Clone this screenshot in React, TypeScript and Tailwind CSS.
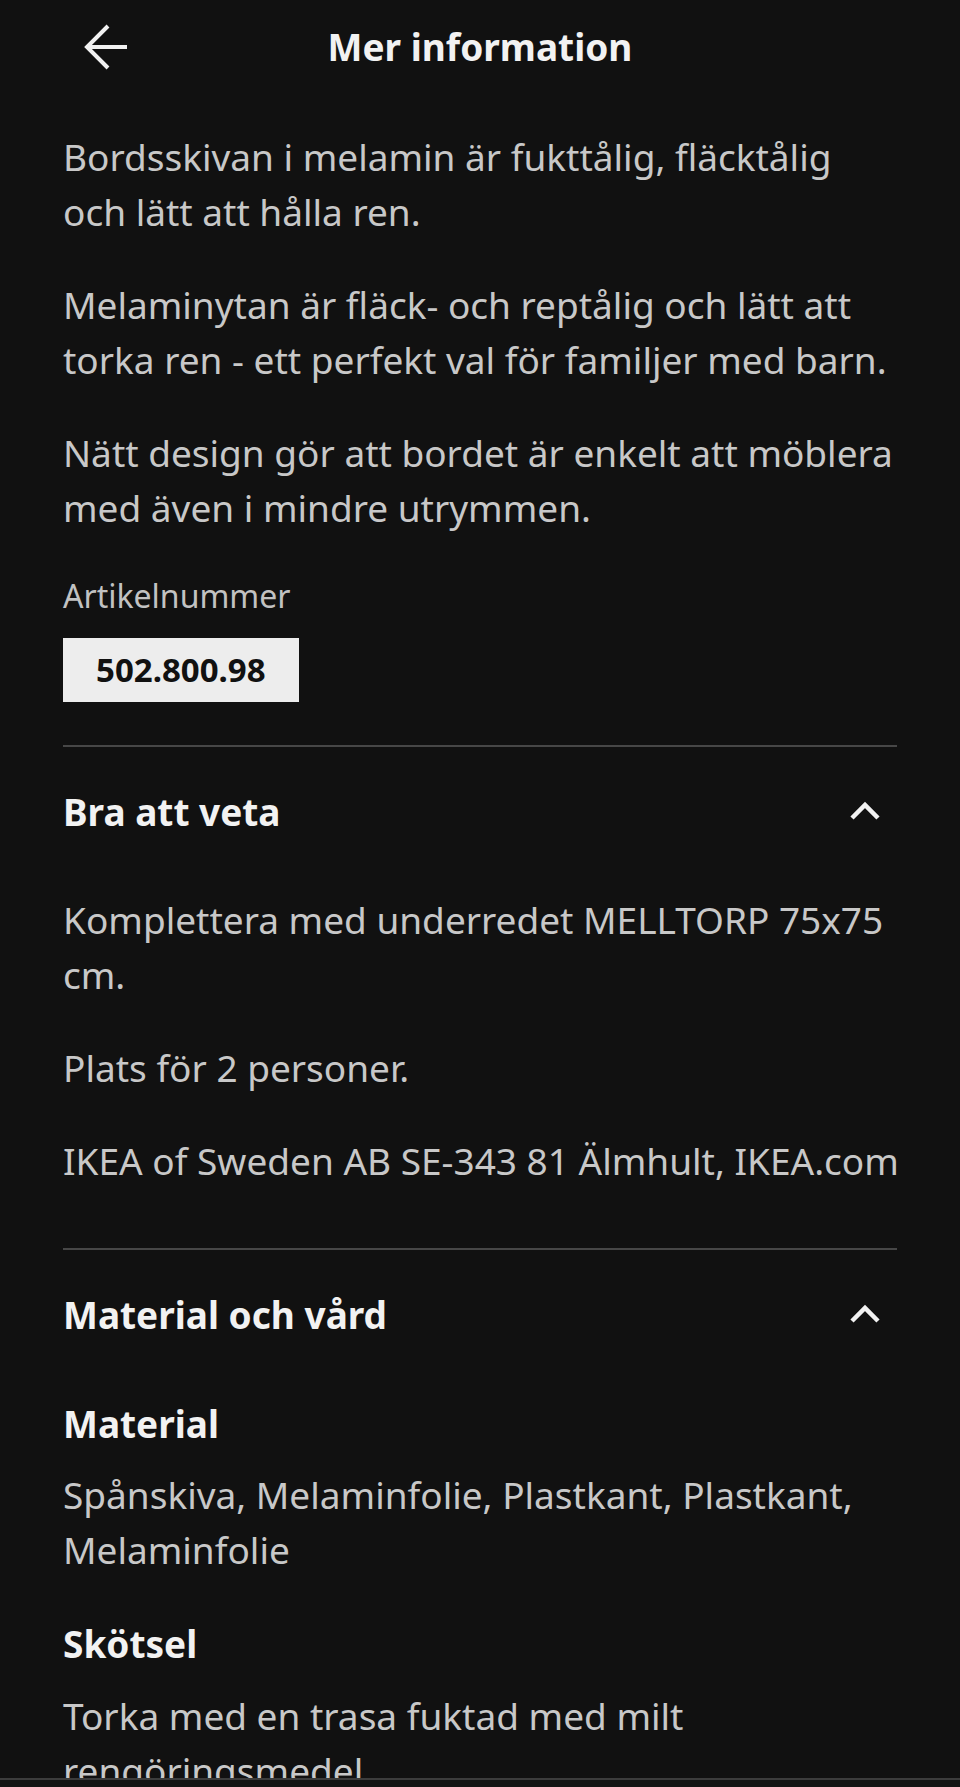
import React from "react";

const font = { fontFamily: '"Noto Sans", "Open Sans", sans-serif' };

function BackArrow() {
  return (
    <svg width="52" height="52" viewBox="0 0 52 52" fill="none" className="block">
      <path d="M6 26 L47 26" stroke="#f2f2f2" strokeWidth="4" />
      <path d="M28 5 L7 26 L28 47" stroke="#f2f2f2" strokeWidth="4" strokeLinejoin="miter" />
    </svg>
  );
}

function Chevron() {
  return (
    <svg width="40" height="40" viewBox="0 0 40 40" fill="none" className="block">
      <path d="M7 26 L20 13 L33 26" stroke="#f2f2f2" strokeWidth="4.5" />
    </svg>
  );
}

const P = ({ children, className = "" }: { children: React.ReactNode; className?: string }) => (
  <p className={`text-[37px] leading-[55px] text-[#c8c8c8] whitespace-nowrap ${className}`}>{children}</p>
);

export default function App() {
  return (
    <div className="w-[960px] h-[1787px] bg-[#111111] flex flex-col overflow-hidden" style={font}>
      <div className="flex-1 overflow-hidden">
        {/* Header */}
        <header className="h-[94px] grid grid-cols-[1fr_auto_1fr] items-center">
          <div className="pl-[80px] flex items-center">
            <BackArrow />
          </div>
          <h1 className="text-[37px] font-bold text-[#f2f2f2] leading-[94px]">Mer information</h1>
          <div />
        </header>

        <main className="px-[63px] pt-[35px]">
          <div className="flex flex-col gap-[38px]">
            <P>
              Bordsskivan i melamin är fukttålig, fläcktålig
              <br />
              och lätt att hålla ren.
            </P>
            <P>
              Melaminytan är fläck- och reptålig och lätt att
              <br />
              torka ren - ett perfekt val för familjer med barn.
            </P>
            <P>
              Nätt design gör att bordet är enkelt att möblera
              <br />
              med även i mindre utrymmen.
            </P>
          </div>

          <div className="mt-[40px] text-[32px] leading-[42px] text-[#c2c2c2]">Artikelnummer</div>
          <div className="mt-[21px] inline-flex h-[64px] items-center bg-[#ededed] px-[33px]">
            <span className="text-[33px] font-bold leading-[64px] text-[#111111]">502.800.98</span>
          </div>

          <div className="mt-[43px] h-[2px] bg-[#474747]" />

          {/* Bra att veta */}
          <section>
            <div className="mt-[37px] flex items-center justify-between">
              <h2 className="text-[37px] leading-[55px] font-bold text-[#f2f2f2]">Bra att veta</h2>
              <div className="mr-[12px]">
                <Chevron />
              </div>
            </div>
            <div className="mt-[53px] flex flex-col gap-[38px]">
              <P>
                Komplettera med underredet MELLTORP 75x75
                <br />
                cm.
              </P>
              <P>Plats för 2 personer.</P>
              <P>IKEA of Sweden AB SE-343 81 Älmhult, IKEA.com</P>
            </div>
          </section>

          <div className="mt-[60px] h-[2px] bg-[#474747]" />

          {/* Material och vård */}
          <section>
            <div className="mt-[37px] flex items-center justify-between">
              <h2 className="text-[37px] leading-[55px] font-bold text-[#f2f2f2]">Material och vård</h2>
              <div className="mr-[12px]">
                <Chevron />
              </div>
            </div>
            <div className="mt-[54px]">
              <h3 className="text-[37px] leading-[55px] font-bold text-[#f2f2f2]">Material</h3>
              <P className="mt-[16px]">
                Spånskiva, Melaminfolie, Plastkant, Plastkant,
                <br />
                Melaminfolie
              </P>
            </div>
            <div className="mt-[39px]">
              <h3 className="text-[37px] leading-[55px] font-bold text-[#f2f2f2]">Skötsel</h3>
              <P className="mt-[17px]">
                Torka med en trasa fuktad med milt
                <br />
                rengöringsmedel
              </P>
            </div>
          </section>
        </main>
      </div>
      <div className="h-[9px] border-t-[2px] border-[#3c3c3c] bg-[#141414]" />
    </div>
  );
}
